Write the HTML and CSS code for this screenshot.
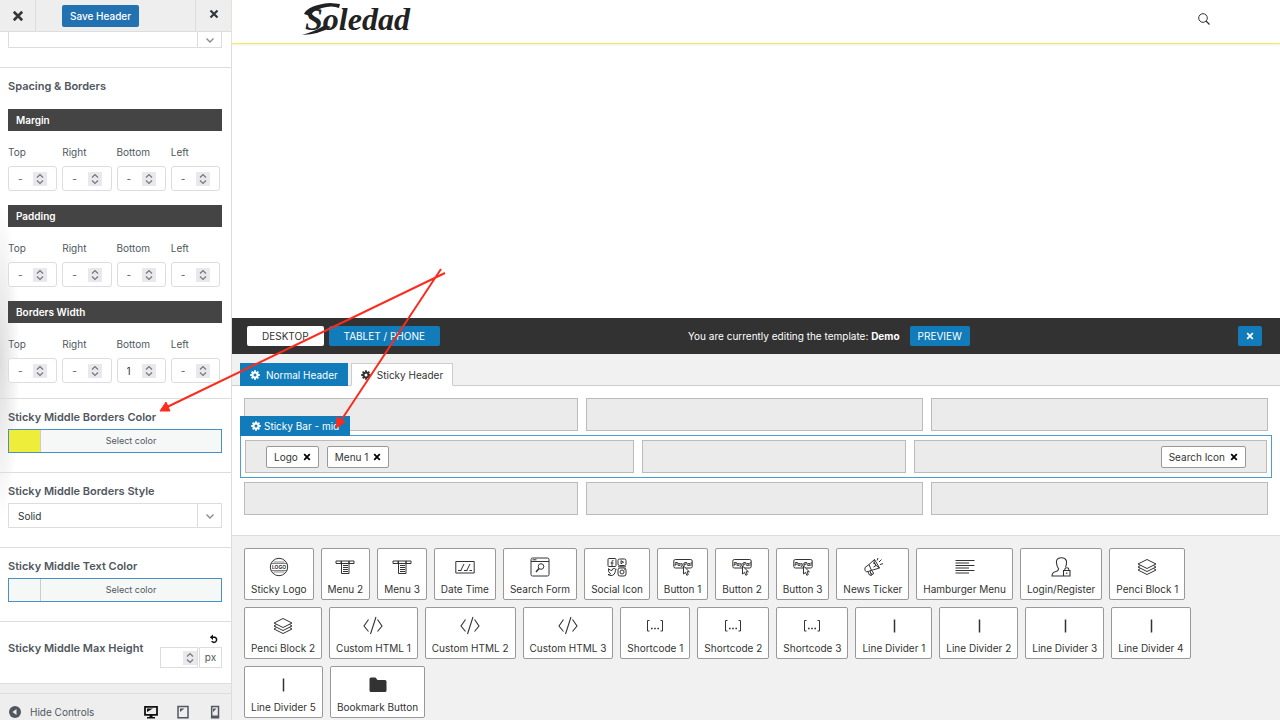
FILE: index.html
```html
<!DOCTYPE html>
<html lang="en">
<head>
    <meta charset="UTF-8" />
    <meta name="viewport" content="width=device-width, initial-scale=1" />
    <title>Header Builder</title>
    <link rel="stylesheet" href="styles.css">
</head>
<body>
    <svg class="sprite" aria-hidden="true">
        <symbol id="i-x" viewBox="0 0 10 10"><path d="M1.5 1.5l7 7M8.5 1.5l-7 7" stroke="currentColor" stroke-width="2.2" fill="none"/></symbol>
        <symbol id="i-down" viewBox="0 0 10 10"><path d="M1.5 3.5L5 7l3.500-3.500" stroke="currentColor" stroke-width="1.300" fill="none"/></symbol>
        <symbol id="i-spin" viewBox="0 0 14 14"><path d="M4 5.500l3-3 3 3M4 8.500l3 3 3-3" stroke="currentColor" stroke-width="1.200" fill="none"/></symbol>
        <symbol id="i-gear" viewBox="0 0 20 20">
            <circle cx="10" cy="10" r="5" fill="none" stroke="currentColor" stroke-width="4"/>
            <path d="M10 0.500v4M10 15.500v4M0.500 10h4M15.500 10h4M3.300 3.300l2.800 2.800M13.900 13.900l2.800 2.800M3.300 16.700l2.800-2.800M13.900 6.100l2.800-2.800" stroke="currentColor" stroke-width="3.600"/>
        </symbol>
        <symbol id="i-logo" viewBox="0 0 20 20">
            <g fill="none" stroke="currentColor"><circle cx="10" cy="10" r="8.700"/><path d="M2 6.500h16M2 13.500h16M4.500 5h11M4.500 15h11" stroke-width=".6"/></g>
            <text x="10" y="12" text-anchor="middle" font-size="5" font-weight="700" fill="currentColor">LOGO</text>
        </symbol>
        <symbol id="i-menu" viewBox="0 0 20 20"><path d="M1 4h18v2.500H1zM6.500 4v12.500h7.500V4M8 8.500h5M8 10.500h5M8 12.500h5M8 14.500h5M6 4v2.500M14 4v2.500" fill="none" stroke="currentColor"/></symbol>
        <symbol id="i-date" viewBox="0 0 20 20"><path d="M.8 4.500h18.400v11.500H.8zM3 13.500h3.500M9 13.500h3.500M14.500 13.500h2.500M9 7l-3 6M15 7l-3 6" fill="none" stroke="currentColor"/></symbol>
        <symbol id="i-form" viewBox="0 0 20 20"><g fill="none" stroke="currentColor"><rect x="1" y="1" width="18" height="18" rx="1.500"/><path d="M1 4.500h18M2.500 2.800h4"/><circle cx="11" cy="9.500" r="2.800"/><path d="M9 11.500l-3 3.500" stroke-width="1.500"/></g></symbol>
        <symbol id="i-social" viewBox="0 0 20 20"><g fill="none" stroke="currentColor">
            <rect x="1" y="1.500" width="8" height="8" rx="1"/><path d="M6.500 3.500H5.800Q5 3.500 5 4.500v5M3.700 6h2.800"/>
            <rect x="11" y="2" width="8" height="6.500" rx="1.500"/><path d="M14 3.700v3l2.600-1.500zM11 9.800h8"/>
            <rect x="11" y="11" width="8" height="8" rx="2"/><circle cx="15" cy="15" r="2"/><path d="M17 12.700h.8"/>
            <path d="M1 17.500q2 .3 2.500-.7Q1 15.500 1.500 11.700 3.200 13.600 5 13.500q.2-2.200 2-2 .8 0 1.200.7l1-.2-.8 1.500Q8 18.500 4 18.500q-2 0-3-1z"/></g></symbol>
        <symbol id="i-button" viewBox="0 0 20 20">
            <rect x=".8" y="2.500" width="18.400" height="8.500" rx="1.500" fill="none" stroke="currentColor"/>
            <text x="10" y="9" text-anchor="middle" font-size="5" font-weight="800" font-style="italic" fill="currentColor">PayPal</text>
            <path d="M10.500 9v8l2-1.700 1.300 3 1.500-.7-1.300-2.800h2.400z" fill="#fff" stroke="currentColor"/>
        </symbol>
        <symbol id="i-news" viewBox="0 0 20 20"><path d="M2 10.500L6 7.500l5.500-5 5 8.500L8 13.500l-4.500 1.500Q1 13.500 2 10.500zM6 7.500l2.500 6M11.500 2.500q-2 4.500 5 8.500M10 6q2.500-.5 3 2.500L10.500 10M5 15l1.500 3 2 .5-1.500-4.500M8 16.500l2 1 .5-1.500-1.500-2M16 5l2.500-2.500M17 7.500l3-.8M14 3.500L15 1" fill="none" stroke="currentColor"/></symbol>
        <symbol id="i-burger" viewBox="0 0 20 20"><path d="M.5 3.500h19M.5 6h13.500M.5 8.500h19M.5 11h13.500M.5 13.500h19M.5 16h13.500" stroke="currentColor"/></symbol>
        <symbol id="i-login" viewBox="0 0 20 20"><path d="M14.500 10q1.500-2.500.8-6.500Q14 .5 10 .7 5 1 5.500 6q.3 3.500 2 5.500 0 2.500-2.500 3-4 .8-4 4.500h11.500M12.500 13.500h6.500V19h-6.500zM13.800 13.500v-1.200q0-1.500 2-1.500t2 1.500v1.200M15.800 15.500v1.500" fill="none" stroke="currentColor" stroke-width="1.100"/></symbol>
        <symbol id="i-block" viewBox="0 0 20 20"><path d="M10 2.500l9 4.500-9 4.500L1 7zM3.500 8.500L1 10l9 4.500 9-4.500-2.500-1.500M3.500 11.500L1 13l9 4.500 9-4.500-2.500-1.500" fill="none" stroke="currentColor" stroke-linejoin="round"/></symbol>
        <symbol id="i-code" viewBox="0 0 20 20"><path d="M5.500 3.500L1 10l4.500 5.500M14.500 3.500L19 10l-4.500 5.500M13 1L7.500 18" fill="none" stroke="currentColor" stroke-width="1.100"/></symbol>
        <symbol id="i-short" viewBox="0 0 20 20"><path d="M4.500 4.500H2.500v10.500h2M15.500 4.500h2v10.500h-2" fill="none" stroke="currentColor"/><path d="M6 12.500h1.600M9.200 12.500h1.600M12.400 12.500H14" stroke="currentColor" stroke-width="1.500"/></symbol>
        <symbol id="i-line" viewBox="0 0 20 20"><path d="M10.500 3.500v13" stroke="currentColor" stroke-width="1.500"/></symbol>
        <symbol id="i-folder" viewBox="0 0 20 20"><path d="M1.500 4q0-1.500 1.500-1.500h4.500l2 2.500H17q1.500 0 1.500 1.500V15.500q0 1.500-1.500 1.500H3q-1.500 0-1.500-1.500z" fill="currentColor"/></symbol>
    </svg>

    <aside class="sidebar">
        <header class="side-header">
            <button class="side-close" aria-label="Close"><svg class="icon-12"><use href="#i-x"/></svg></button>
            <div class="side-save"><button class="save">Save Header</button></div>
            <button class="side-exit" aria-label="Exit"><svg class="icon-10"><use href="#i-x"/></svg></button>
        </header>

        <div class="controls">
            <section class="control control-cut">
                <div class="select select-cut">
                    <select aria-label="Option"><option></option></select>
                    <span class="arrow"><svg class="icon-10"><use href="#i-down"/></svg></span>
                </div>
            </section>

            <section class="control spacing">
                <h3>Spacing &amp; Borders</h3>
                <fieldset>
                    <legend>Margin</legend>
                    <div class="sides">
                        <label>Top<span class="num"><input type="number" placeholder="-"><svg><use href="#i-spin"/></svg></span></label>
                        <label>Right<span class="num"><input type="number" placeholder="-"><svg><use href="#i-spin"/></svg></span></label>
                        <label>Bottom<span class="num"><input type="number" placeholder="-"><svg><use href="#i-spin"/></svg></span></label>
                        <label>Left<span class="num"><input type="number" placeholder="-"><svg><use href="#i-spin"/></svg></span></label>
                    </div>
                </fieldset>
                <fieldset>
                    <legend>Padding</legend>
                    <div class="sides">
                        <label>Top<span class="num"><input type="number" placeholder="-"><svg><use href="#i-spin"/></svg></span></label>
                        <label>Right<span class="num"><input type="number" placeholder="-"><svg><use href="#i-spin"/></svg></span></label>
                        <label>Bottom<span class="num"><input type="number" placeholder="-"><svg><use href="#i-spin"/></svg></span></label>
                        <label>Left<span class="num"><input type="number" placeholder="-"><svg><use href="#i-spin"/></svg></span></label>
                    </div>
                </fieldset>
                <fieldset>
                    <legend>Borders Width</legend>
                    <div class="sides">
                        <label>Top<span class="num"><input type="number" placeholder="-"><svg><use href="#i-spin"/></svg></span></label>
                        <label>Right<span class="num"><input type="number" placeholder="-"><svg><use href="#i-spin"/></svg></span></label>
                        <label>Bottom<span class="num"><input type="number" placeholder="-" value="1"><svg><use href="#i-spin"/></svg></span></label>
                        <label>Left<span class="num"><input type="number" placeholder="-"><svg><use href="#i-spin"/></svg></span></label>
                    </div>
                </fieldset>
            </section>

            <section class="control">
                <h3 id="borderColor">Sticky Middle Borders Color</h3>
                <button class="picker" aria-describedby="borderColor"><span class="swatch yellow"></span><span class="picker-text">Select color</span></button>
            </section>

            <section class="control">
                <h3><label for="borderStyle">Sticky Middle Borders Style</label></h3>
                <div class="select">
                    <select id="borderStyle"><option>Solid</option></select>
                    <span class="arrow"><svg class="icon-10"><use href="#i-down"/></svg></span>
                </div>
            </section>

            <section class="control">
                <h3 id="textColor">Sticky Middle Text Color</h3>
                <button class="picker" aria-describedby="textColor"><span class="swatch"></span><span class="picker-text">Select color</span></button>
            </section>

            <section class="control max-height">
                <h3><label for="maxHeight">Sticky Middle Max Height</label></h3>
                <div class="size">
                    <button class="reset" aria-label="Reset"><svg class="icon-10" viewBox="0 0 10 10"><path d="M2 3.200h4a2.700 2.700 0 1 1-3.300 4" fill="none" stroke="currentColor" stroke-width="1.500"/><path d="M4 0.500v5.400L.8 3.200z" fill="currentColor"/></svg></button>
                    <div class="size-row">
                        <span class="num"><input type="number" id="maxHeight"><svg><use href="#i-spin"/></svg></span>
                        <span class="unit">px</span>
                    </div>
                </div>
            </section>
        </div>

        <footer class="side-footer">
            <button class="hide"><svg class="icon-12" viewBox="0 0 12 12"><circle cx="6" cy="6" r="6" fill="currentColor"/><path d="M7.500 3v6L3.500 6z" fill="#eee"/></svg>Hide Controls</button>
            <div class="devices">
                <button class="active" aria-label="Desktop"><svg class="icon-14" viewBox="0 0 14 14"><path d="M1 1.800h12v8H1z" fill="none" stroke="currentColor" stroke-width="1.800"/><path d="M3 7V3.500h6zM5.500 10h3v2h2.500v1.500H3V12h2.500z" fill="currentColor"/></svg></button>
                <button aria-label="Tablet"><svg class="icon-14" viewBox="0 0 14 14"><path d="M2 1.500h10v11.300H2z" fill="none" stroke="currentColor" stroke-width="1.500"/><path d="M4 7V3.500h4.500z" fill="currentColor"/></svg></button>
                <button aria-label="Mobile"><svg class="icon-14" viewBox="0 0 14 14"><path d="M3.700 1.500h6.800v11.300H3.700z" fill="none" stroke="currentColor" stroke-width="1.500"/><path d="M5 7V3.500h3.500zM4 10.500h6.500v2.500H4z" fill="currentColor"/></svg></button>
            </div>
        </footer>
    </aside>

    <main class="main">
        <div class="preview">
            <header class="site-header">
                <a class="logo" href="#">Soledad<svg class="swash" viewBox="0 0 40 34"><path d="M0 33Q14 29 23 23L29 25Q18 32 0 33zM2 12Q6 3 28 1L38 2 37 6Q30 3 20 6 10 9 8 14z" fill="currentColor"/></svg></a>
                <button class="search" aria-label="Search"><svg class="icon-12" viewBox="0 0 12 12"><circle cx="5" cy="5" r="4.300" fill="none" stroke="currentColor"/><path d="M8 8l3.500 3.500" stroke="currentColor" stroke-width="1.200"/></svg></button>
            </header>
        </div>

        <div class="toolbar">
            <div class="group">
                <button class="tool white">DESKTOP</button>
                <button class="tool">TABLET / PHONE</button>
            </div>
            <div class="group editing">
                <span>You are currently editing the template: <b>Demo</b></span>
                <button class="tool small">PREVIEW</button>
            </div>
            <button class="tool small" aria-label="Close builder"><svg class="icon-8"><use href="#i-x"/></svg></button>
        </div>

        <nav class="tabs">
            <button class="tab blue"><svg class="icon-10"><use href="#i-gear"/></svg>Normal Header</button>
            <button class="tab"><svg class="icon-10"><use href="#i-gear"/></svg>Sticky Header</button>
        </nav>

        <div class="rows">
            <div class="row"><div class="cell"></div><div class="cell"></div><div class="cell"></div></div>
            <div class="row row-mid">
                <button class="row-label"><svg class="icon-10"><use href="#i-gear"/></svg>Sticky Bar - mid</button>
                <div class="cell">
                    <span class="item">Logo<button aria-label="Remove Logo"><svg class="icon-8"><use href="#i-x"/></svg></button></span>
                    <span class="item">Menu 1<button aria-label="Remove Menu 1"><svg class="icon-8"><use href="#i-x"/></svg></button></span>
                </div>
                <div class="cell"></div>
                <div class="cell end">
                    <span class="item">Search Icon<button aria-label="Remove Search Icon"><svg class="icon-8"><use href="#i-x"/></svg></button></span>
                </div>
            </div>
            <div class="row"><div class="cell"></div><div class="cell"></div><div class="cell"></div></div>
        </div>

        <div class="elements">
            <button class="element"><svg><use href="#i-logo"/></svg>Sticky Logo</button>
            <button class="element"><svg><use href="#i-menu"/></svg>Menu 2</button>
            <button class="element"><svg><use href="#i-menu"/></svg>Menu 3</button>
            <button class="element"><svg><use href="#i-date"/></svg>Date Time</button>
            <button class="element"><svg><use href="#i-form"/></svg>Search Form</button>
            <button class="element"><svg><use href="#i-social"/></svg>Social Icon</button>
            <button class="element"><svg><use href="#i-button"/></svg>Button 1</button>
            <button class="element"><svg><use href="#i-button"/></svg>Button 2</button>
            <button class="element"><svg><use href="#i-button"/></svg>Button 3</button>
            <button class="element"><svg><use href="#i-news"/></svg>News Ticker</button>
            <button class="element"><svg><use href="#i-burger"/></svg>Hamburger Menu</button>
            <button class="element"><svg><use href="#i-login"/></svg>Login/Register</button>
            <button class="element"><svg><use href="#i-block"/></svg>Penci Block 1</button>
            <button class="element"><svg><use href="#i-block"/></svg>Penci Block 2</button>
            <button class="element"><svg><use href="#i-code"/></svg>Custom HTML 1</button>
            <button class="element"><svg><use href="#i-code"/></svg>Custom HTML 2</button>
            <button class="element"><svg><use href="#i-code"/></svg>Custom HTML 3</button>
            <button class="element"><svg><use href="#i-short"/></svg>Shortcode 1</button>
            <button class="element"><svg><use href="#i-short"/></svg>Shortcode 2</button>
            <button class="element"><svg><use href="#i-short"/></svg>Shortcode 3</button>
            <button class="element"><svg><use href="#i-line"/></svg>Line Divider 1</button>
            <button class="element"><svg><use href="#i-line"/></svg>Line Divider 2</button>
            <button class="element"><svg><use href="#i-line"/></svg>Line Divider 3</button>
            <button class="element"><svg><use href="#i-line"/></svg>Line Divider 4</button>
            <button class="element"><svg><use href="#i-line"/></svg>Line Divider 5</button>
            <button class="element"><svg><use href="#i-folder"/></svg>Bookmark Button</button>
        </div>
    </main>

    <svg class="arrows" width="300" height="170" viewBox="155 265 300 170" aria-hidden="true">
        <path d="M445 273L165 408M441 269L340 422" stroke="#fb2c1d" stroke-width="2" fill="none"/>
        <path d="M160 411l6-9 4 9zM336 428l1-11 8 5z" fill="#fb2c1d" stroke="#fb2c1d"/>
    </svg>
</body>
</html>
```

FILE: styles.css
```css
* { box-sizing: border-box; }

body {
    margin: 0;
    display: flex;
    height: 100vh;
    overflow: hidden;
    position: relative;
    font-family: Inter, "Liberation Sans", sans-serif;
    font-size: 10px;
    line-height: 16px;
    color: #333;
    background: #fff;
}

button, input, select {
    font: inherit;
    color: inherit;
    margin: 0;
    padding: 0;
    border: 0;
    background: none;
}
button { cursor: pointer; }
svg { display: block; flex: none; }

.sprite { display: none; }
.icon-8 { width: 8px; height: 8px; }
.icon-10 { width: 10px; height: 10px; }
.icon-12 { width: 12px; height: 12px; }
.icon-14 { width: 14px; height: 14px; }

/* customizer sidebar */
.sidebar {
    flex: 0 0 232px;
    display: flex;
    flex-direction: column;
    background: #eee;
    border-right: 1px solid #ddd;
    color: #50575e;
}
.side-header {
    display: flex;
    height: 32px;
    flex: none;
    border-bottom: 1px solid #ddd;
    color: #32373c;
}
.side-close, .side-exit {
    width: 36px;
    display: flex;
    align-items: center;
    justify-content: center;
}
.side-close { border-right: 1px solid #ddd; }
.side-exit { border-left: 1px solid #ddd; padding-bottom: 4px; }
.side-save {
    flex: 1;
    display: flex;
    align-items: center;
    padding-left: 26px;
}
.save {
    background: #2271b1;
    color: #fff;
    border-radius: 2px;
    padding: 3px 8px;
    font-weight: 500;
}

.controls {
    background: radial-gradient(ellipse 20px 160px at 0 330px, #ddd, #fff);
}
.control {
    padding: 10px 9px 19px 8px;
    border-bottom: 1px solid #ddd;
}
.control h3 {
    margin: 0 0 4px;
    font-size: 11px;
    line-height: 16px;
    font-weight: 600;
}
.control-cut { padding-top: 0; }
.spacing { padding-bottom: 15px; }
.spacing h3 { margin-bottom: 15px; }

fieldset {
    margin: 0 0 14px;
    padding: 0;
    border: 0;
    min-width: 0;
}
fieldset:last-child { margin-bottom: 0; }
legend {
    width: 100%;
    padding: 3px 8px;
    margin-bottom: 13px;
    background: #444;
    color: #fff;
    font-weight: 600;
}
.sides {
    display: grid;
    grid-template-columns: repeat(4, 1fr);
    gap: 5px;
    padding-right: 2px;
}
.num {
    display: flex;
    align-items: center;
    height: 25px;
    border: 1px solid #ddd;
    border-radius: 3px;
    background: #fff;
    color: #2c3338;
}
.sides .num { margin-top: 6px; padding: 0 9px; }
.num input {
    flex: 1;
    min-width: 0;
    width: 0;
    outline: 0;
    appearance: textfield;
}
.num input::-webkit-inner-spin-button { display: none; }
.num input::placeholder { color: #50575e; }
.num svg {
    width: 14px;
    height: 14px;
    background: #e9e9ed;
    color: #777;
}

.picker {
    display: flex;
    width: 100%;
    height: 24px;
    border: 1px solid #4a90c4;
    background: #f6f7f7;
    font-size: 9px;
    align-items: stretch;
}
.swatch { width: 32px; border-right: 1px solid #ccc; }
.yellow { background: #eeee3a; }
.picker-text { flex: 1; line-height: 22px; }

.select {
    display: flex;
    height: 25px;
    border: 1px solid #ddd;
    background: #fff;
    color: #2c3338;
}
.select-cut { height: 16px; border-top: 0; }
.select select {
    flex: 1;
    appearance: none;
    padding-left: 9px;
    outline: 0;
}
.arrow {
    width: 24px;
    border-left: 1px solid #ddd;
    display: flex;
    align-items: center;
    justify-content: center;
    color: #888;
}

.max-height {
    display: flex;
    justify-content: space-between;
    align-items: flex-start;
    padding: 12px 9px 15px 8px;
}
.max-height h3 { margin: 6px 0 0; }
.size {
    display: flex;
    flex-direction: column;
    align-items: flex-end;
    gap: 3px;
}
.reset { color: #111; padding-right: 3px; }
.size-row { display: flex; gap: 1px; }
.size-row .num { width: 38px; height: 21px; border-radius: 0; }
.unit {
    width: 23px;
    border: 1px solid #ddd;
    text-align: center;
    line-height: 19px;
}

.side-footer {
    display: flex;
    justify-content: space-between;
    margin-top: auto;
    padding: 10px 9px 0;
    border-top: 1px solid #ddd;
    color: #50575e;
}
.hide { display: flex; align-items: center; gap: 9px; }
.devices { display: flex; align-items: center; gap: 18px; }
.active { color: #111; }

/* site preview */
.main {
    flex: 1;
    min-width: 0;
    display: flex;
    flex-direction: column;
}
.preview { flex: 1; }
.site-header {
    display: flex;
    justify-content: space-between;
    align-items: center;
    height: 44px;
    padding: 0 70px 6px;
    border-bottom: 1px solid #eded62;
    box-shadow: 0 1px 2px #f0f0d0;
}
.logo {
    position: relative;
    padding-left: 3px;
    color: #222;
    text-decoration: none;
    font: italic 700 32px/40px "Liberation Serif", cursive;
}
.swash {
    position: absolute;
    left: 0;
    top: 3px;
    width: 40px;
    height: 34px;
}
.search { color: #333; }

/* header builder */
.toolbar {
    display: flex;
    justify-content: space-between;
    align-items: center;
    padding: 8px 18px 8px 15px;
    background: #323232;
    color: #fff;
}
.group { display: flex; align-items: center; gap: 5px; }
.editing { gap: 10px; margin-right: 20px; }
.tool {
    display: flex;
    align-items: center;
    height: 20px;
    padding: 0 15px;
    border-radius: 2px;
    background: #117cb9;
    color: #fff;
}
.tool.white { background: #fff; color: #333; }
.tool.small { padding: 0 8px; }

.tabs {
    display: flex;
    gap: 3px;
    padding: 9px 8px 0;
    background: #f1f1f1;
    border-bottom: 1px solid #ccc;
}
.tab {
    display: flex;
    align-items: center;
    gap: 6px;
    height: 23px;
    margin-bottom: -1px;
    padding: 0 9px;
    border: 1px solid #ccc;
    border-bottom-color: #fff;
    background: #fff;
}
.tab.blue { background: #117cb9; border-color: #117cb9; color: #fff; }

.rows {
    display: flex;
    flex-direction: column;
    gap: 4px;
    padding: 12px 8px 20px;
}
.row {
    display: grid;
    grid-template-columns: 334fr 337fr 337fr;
    gap: 8px;
    padding: 0 4px;
}
.row-mid {
    position: relative;
    grid-template-columns: 390fr 264fr 354fr;
    padding: 4px;
    border: 1px solid #4a9fd0;
}
.row-label {
    position: absolute;
    left: -1px;
    bottom: 100%;
    display: flex;
    align-items: center;
    gap: 3px;
    height: 20px;
    padding: 0 11px;
    background: #117cb9;
    color: #fff;
}
.cell {
    display: flex;
    align-items: center;
    gap: 8px;
    height: 33px;
    padding: 0 20px;
    border: 1px solid #bbb;
    background: #ebebeb;
}
.cell.end { justify-content: flex-end; }
.item {
    display: flex;
    align-items: center;
    gap: 5px;
    height: 22px;
    padding: 0 7px;
    border: 1px solid #999;
    border-radius: 2px;
    background: #fff;
}
.item button { color: #000; }

.elements {
    display: flex;
    flex-wrap: wrap;
    gap: 7px;
    padding: 12px 24px 2px 12px;
    background: #f1f1f1;
    border-top: 1px solid #ddd;
}
.element {
    display: flex;
    flex-direction: column;
    align-items: center;
    gap: 4px;
    height: 52px;
    padding: 8px 6px;
    border: 1px solid #999;
    border-radius: 2px;
    background: #fff;
}
.element svg { width: 20px; height: 20px; }

.arrows {
    position: absolute;
    left: 155px;
    top: 265px;
    pointer-events: none;
}
```
